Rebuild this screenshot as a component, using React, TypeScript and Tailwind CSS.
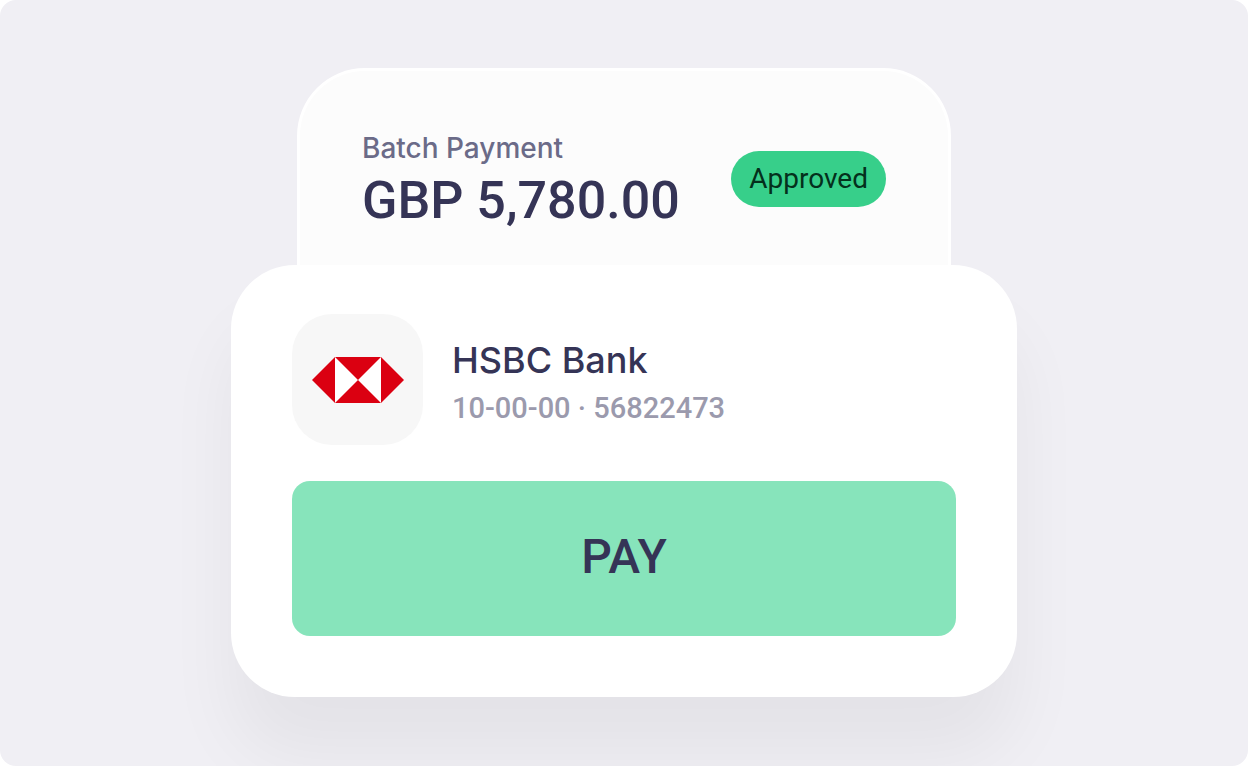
type BatchCardProps = {
  label: string;
  amount: string;
  status: string;
};

const BatchCard = ({ label, amount, status }: BatchCardProps) => {
  return (
    <section className="mx-[66px] flex items-center justify-between gap-4 rounded-t-[68px] border-[3px] border-b-0 border-white bg-[#fcfcfc] px-[62px] pt-[53px] pb-[31px]">
      <div className="pt-1">
        <p className="font-[Inter,sans-serif] text-[28px] font-medium leading-10 text-[#6b6b88]">{label}</p>
        <p className="font-[Roboto,sans-serif] text-[52px] font-medium leading-[66px] text-[#353456]">{amount}</p>
      </div>
      <span className="rounded-full bg-[#37cf8a] px-[18px] font-[Roboto,sans-serif] text-[28px] leading-[56px] text-[#04301c]">
        {status}
      </span>
    </section>
  );
};

const HsbcLogo = () => {
  return (
    <svg viewBox="0 0 92 46" className="w-[92px]" aria-hidden="true">
      <path d="M23 0h46v46H23z" fill="#fff" />
      <path d="M0 23 23 0v46zM92 23 69 0v46zM23 0h46L46 23zM23 46h46L46 23z" fill="#db0011" />
    </svg>
  );
};

type PayCardProps = {
  bank: string;
  account: string;
};

const PayCard = ({ bank, account }: PayCardProps) => {
  return (
    <section className="rounded-[64px] bg-white px-[61px] pt-[49px] pb-[61px] shadow-[0_60px_70px_rgba(20,18,24,0.05)]">
      <div className="flex items-center gap-[29px]">
        <div className="flex size-[131px] shrink-0 items-center justify-center rounded-[40px] bg-[#f7f7f7]">
          <HsbcLogo />
        </div>
        <div className="pt-1">
          <h2 className="font-[Inter,sans-serif] text-[36px] font-medium leading-[52px] text-[#353456]">{bank}</h2>
          <p className="font-[Roboto,sans-serif] text-[29px] font-medium leading-[44px] text-[#9b9aad]">{account}</p>
        </div>
      </div>
      <button
        type="button"
        className="mt-9 h-[155px] w-full rounded-[18px] bg-[#87e4bb] pb-1 font-[Roboto,sans-serif] text-[48px] font-medium text-[#353456] transition hover:bg-[#76dcae]"
      >
        PAY
      </button>
    </section>
  );
};

const App = () => {
  return (
    <div className="bg-white">
      <main className="min-h-screen overflow-hidden rounded-2xl bg-[#f0eff4] px-4 pt-[68px] pb-[69px]">
        <div className="mx-auto w-full max-w-[786px]">
          <BatchCard label="Batch Payment" amount="GBP 5,780.00" status="Approved" />
          <PayCard bank="HSBC Bank" account="10-00-00 · 56822473" />
        </div>
      </main>
    </div>
  );
};

export default App;
